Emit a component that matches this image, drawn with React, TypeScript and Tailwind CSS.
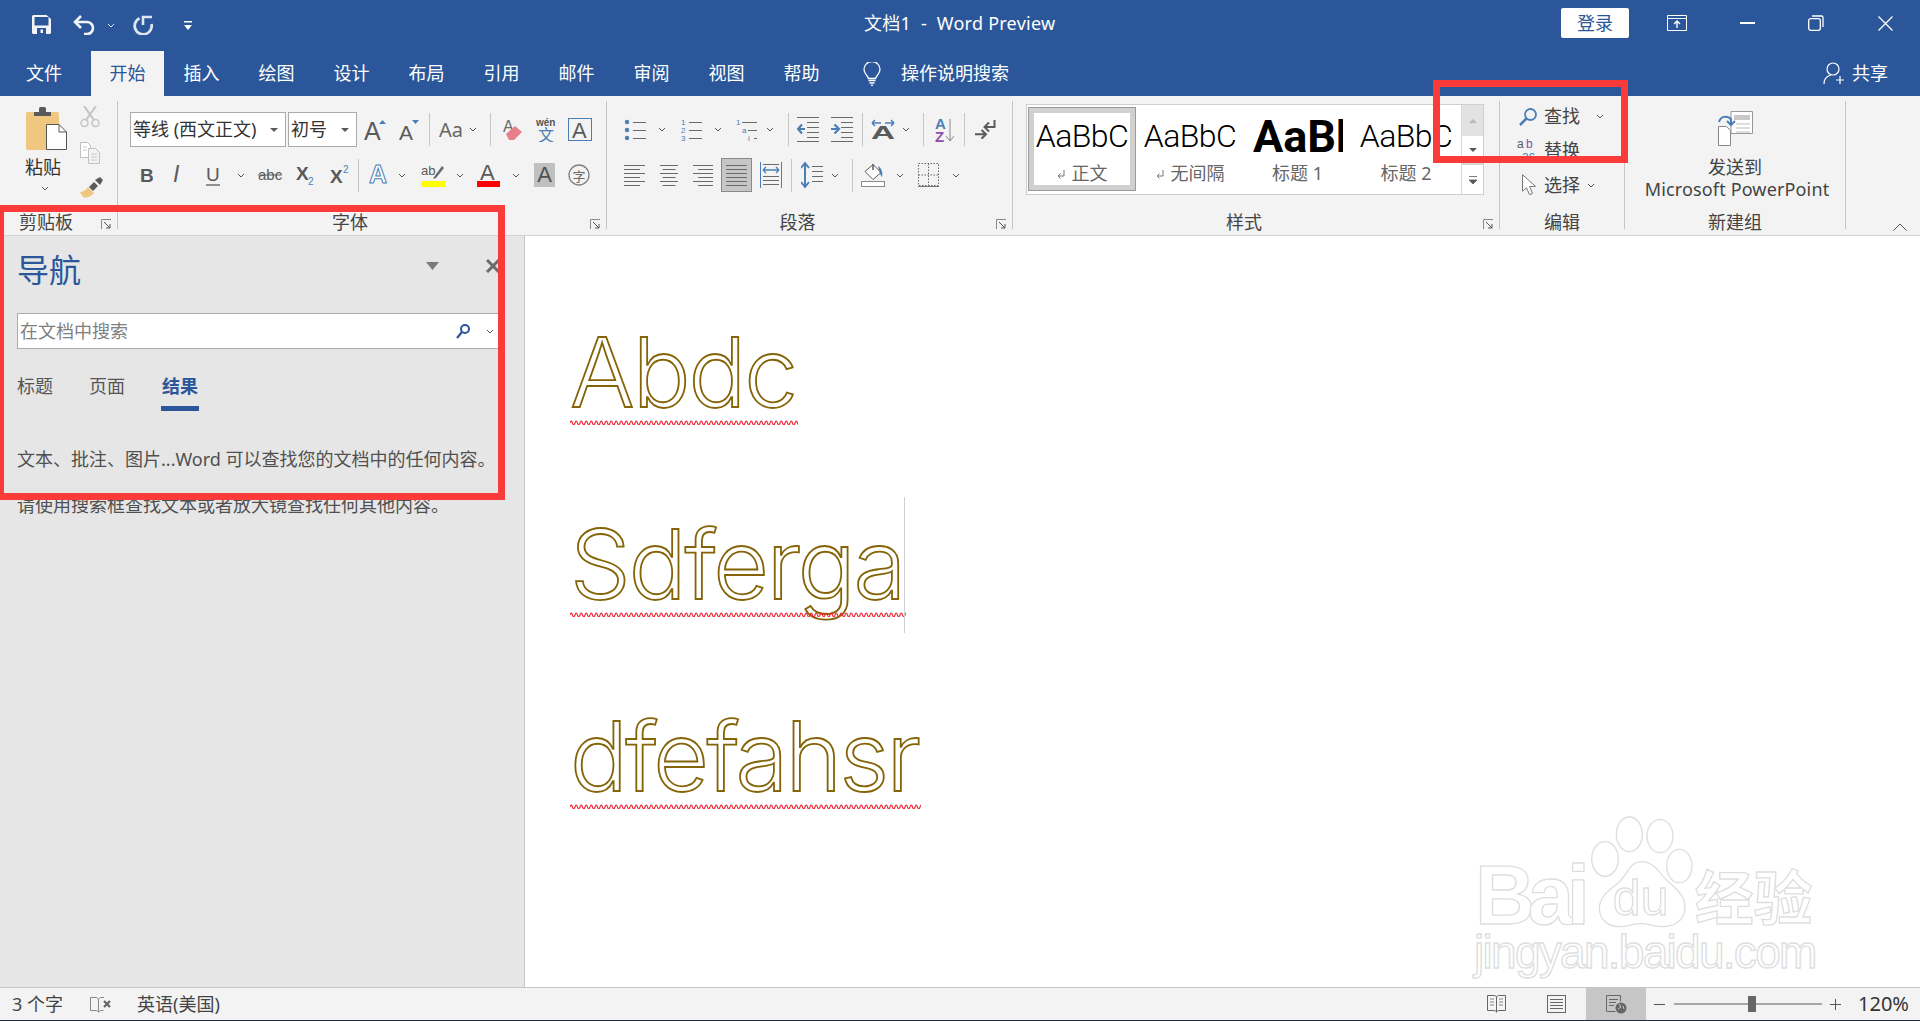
import type { ReactNode } from "react"

const GRAY = "#5a5a5a"
const LINE = "#6a6a6a"
const BLUE = "#4a7fb5"

function Svg({ w, h, className, children }: { w: number; h: number; className?: string; children: ReactNode }) {
  return (
    <svg width={w} height={h} viewBox={`0 0 ${w} ${h}`} className={`shrink-0 ${className ?? ""}`} fill="none">
      {children}
    </svg>
  )
}

function Chev({ className, color = "#555" }: { className?: string; color?: string }) {
  return (
    <Svg w={8} h={5} className={className}>
      <path d="M1 1l3 3 3-3" stroke={color} />
    </Svg>
  )
}

function Sep({ className }: { className?: string }) {
  return <div className={`w-px h-[33px] bg-[#c6c6c6] shrink-0 ${className ?? ""}`} />
}

function GroupSep() {
  return <div className="w-px h-[128px] mt-[5px] bg-[#c6c6c6] shrink-0" />
}

function Launcher({ className }: { className?: string }) {
  return (
    <Svg w={11} h={11} className={`absolute bottom-[5px] ${className ?? ""}`}>
      <path d="M.5 10V.5H10" stroke="#8a8a8a" />
      <path d="M3 3l6 6M9 5v4H5" stroke="#555" />
    </Svg>
  )
}

function Label({ children, className }: { children: ReactNode; className?: string }) {
  return (
    <div className={`relative h-[25px] flex items-center justify-center text-[18px] text-[#444] ${className ?? ""}`}>
      {children}
    </div>
  )
}

function Lines({ w, rows, x = 0 }: { w: number; rows: [number, number, number][]; x?: number }) {
  return (
    <>
      {rows.map(([y, a, b], i) => (
        <path key={i} d={`M${a + x} ${y + 0.5}H${Math.min(b, w)}`} stroke={LINE} />
      ))}
    </>
  )
}

const alignRows = (kind: "l" | "c" | "r" | "j", w: number): [number, number, number][] =>
  [3, 7, 11, 15, 19, 23].map((y, i) => {
    const short = i % 2 === 1 ? 5 : 0
    if (kind === "l") return [y, 0, w - short]
    if (kind === "c") return [y, short / 2 + 1, w - short / 2 - 1]
    if (kind === "r") return [y, short, w]
    return [y, 0, w]
  })

function AlignIcon({ kind, w, className }: { kind: "l" | "c" | "r" | "j"; w: number; className?: string }) {
  return (
    <Svg w={w} h={26} className={className}>
      <Lines w={w} rows={alignRows(kind, w)} />
    </Svg>
  )
}

function SvgText({ x, y, size, fill = GRAY, weight = 400, children, italic }: { x: number; y: number; size: number; fill?: string; weight?: number; children: ReactNode; italic?: boolean }) {
  return (
    <text x={x} y={y} fontSize={size} fill={fill} fontWeight={weight} fontStyle={italic ? "italic" : "normal"} fontFamily="'Liberation Sans','Noto Sans CJK SC',sans-serif">
      {children}
    </text>
  )
}

const tabs = ["插入", "绘图", "设计", "布局", "引用", "邮件", "审阅", "视图", "帮助"]

function TitleBar() {
  return (
    <div className="flex items-center h-[51px] text-white">
      <Svg w={19} h={19} className="ml-[32px] -mt-[3px]">
        <path d="M0 1.500A1.500 1.500 0 011.500 0h13L19 4v13.500a1.500 1.500 0 01-1.500 1.500h-16A1.500 1.500 0 010 17.500z" fill="#f2f4f8" />
        <rect x="2.500" y="2" width="14" height="8.500" fill="#2b579a" />
        <rect x="5" y="13" width="9" height="6" fill="#2b579a" />
        <rect x="8.500" y="14.500" width="2.500" height="3.500" fill="#f2f4f8" />
      </Svg>
      <Svg w={23} h={20} className="ml-[22px] -mt-[2px]">
        <path d="M2 7h12a6 6 0 016 6 6 6 0 01-6 6h-3" stroke="#f2f4f8" strokeWidth="2.600" />
        <path d="M8 1L2 7l6 6" stroke="#f2f4f8" strokeWidth="2.600" />
      </Svg>
      <Chev color="#dfe6f1" className="ml-[11px]" />
      <Svg w={21} h={20} className="ml-[18px] -mt-[2px]">
        <path d="M6.500 3.200A8.500 8.500 0 1018.500 9" stroke="#dfe5ef" strokeWidth="2.800" />
        <path d="M10 10V2h9" stroke="#dfe5ef" strokeWidth="2.600" />
      </Svg>
      <Svg w={8} h={9} className="ml-[30px]">
        <path d="M0 0h8v1.500H0z" fill="#fff" />
        <path d="M0 4h8L4 9z" fill="#fff" />
      </Svg>
      <div className="ml-[672px] w-[210px] text-[18px] whitespace-pre tracking-[0.25px] -mt-[5px]">文档1  -  Word Preview</div>
      <div className="ml-[487px] w-[68px] h-[30px] -mt-[5px] rounded-[2px] bg-white text-[#2b579a] text-[18px] flex items-center justify-center">登录</div>
      <Svg w={20} h={16} className="ml-[38px] -mt-[5px]">
        <path d="M.5.500h19v15H.5zM.5 3.500h19" stroke="#fff" />
        <path d="M10 13V6M7 9l3-3 3 3" stroke="#fff" strokeWidth="1.400" />
      </Svg>
      <div className="ml-[53px] w-[15px] h-[1.5px] bg-white -mt-[5px]" />
      <Svg w={16} h={16} className="ml-[53px] -mt-[5px]">
        <rect x=".7" y="3.700" width="11.600" height="11.600" rx="2" stroke="#fff" strokeWidth="1.300" />
        <path d="M4 1h9.500A1.500 1.500 0 0115 2.500V12" stroke="#fff" strokeWidth="1.300" />
      </Svg>
      <Svg w={15} h={15} className="ml-[54px] -mt-[5px]">
        <path d="M.5.500l14 14M14.500.500l-14 14" stroke="#fff" strokeWidth="1.300" />
      </Svg>
    </div>
  )
}

function TabBar() {
  return (
    <div className="flex h-[45px] text-[18px] text-white">
      <div className="w-[88px] flex items-center justify-center">文件</div>
      <div className="ml-[3px] w-[73px] flex items-center justify-center bg-[#f3f3f3] text-[#2b579a]">开始</div>
      {tabs.map((t) => (
        <div key={t} className="w-[75px] flex items-center justify-center">
          {t}
        </div>
      ))}
      <div className="ml-[24px] flex items-center">
        <Svg w={18} h={24}>
          <path d="M5.500 16.500C4.800 13.500 1 12 1 7.500a8 8 0 0116 0c0 4.500-3.800 6-4.500 9z" stroke="#fff" strokeWidth="1.300" />
          <path d="M5.500 18.500h7M6.500 21h5M8 23.500h2" stroke="#fff" strokeWidth="1.300" />
        </Svg>
      </div>
      <div className="ml-[20px] flex items-center">操作说明搜索</div>
      <div className="ml-auto mr-[32px] flex items-center">
        <Svg w={22} h={23}>
          <circle cx="10" cy="7" r="6" stroke="#fff" strokeWidth="1.200" />
          <path d="M1 22c0-5 3-8 7-9M13 18h8M17 14v8" stroke="#fff" strokeWidth="1.200" />
        </Svg>
        <span className="ml-[7px]">共享</span>
      </div>
    </div>
  )
}

function ClipboardGroup() {
  return (
    <div className="w-[117px] shrink-0 flex flex-col">
      <div className="flex-1 flex">
        <div className="ml-[25px] w-[42px] flex flex-col items-center pt-[11px]">
          <Svg w={41} h={43}>
            <rect x="0" y="5" width="33" height="38" rx="2" fill="#efc77f" />
            <path d="M8 5h17V9H8z" fill={GRAY} />
            <rect x="13" y="0" width="7" height="7" rx="1.500" fill={GRAY} />
            <path d="M20.500 17.500H33l7.500 7.500v17.500h-20z" fill="#fff" stroke="#555" />
            <path d="M33 17.500V25h7.500" stroke="#555" />
          </Svg>
          <div className="mt-[6px] -ml-[6px] text-[18px] leading-[22px] text-[#333]">粘贴</div>
          <Chev className="mt-[8px] -ml-[2px]" />
        </div>
        <div className="ml-[13px] flex flex-col pt-[10px]">
          <Svg w={20} h={22}>
            <circle cx="4.500" cy="17" r="3.500" stroke="#c4c4c4" strokeWidth="1.500" />
            <circle cx="15.500" cy="17" r="3.500" stroke="#c4c4c4" strokeWidth="1.500" />
            <path d="M6 14L16 0M14 14L4 0" stroke="#c4c4c4" strokeWidth="2" />
          </Svg>
          <Svg w={20} h={22} className="mt-[14px]">
            <path d="M.5.500h7l3 3v12H.5z" fill="#fff" stroke="#c0c0c0" />
            <path d="M8.500 6.500h7l4 4v11h-11z" fill="#f3f3f3" stroke="#c0c0c0" />
            <path d="M11 12h6M11 15h6M11 18h6M3 5h4M3 8h4" stroke="#c8c8c8" />
          </Svg>
          <Svg w={23} h={21} className="mt-[13px]">
            <path d="M15 3l5-3 3 3-3 5z" fill={GRAY} />
            <path d="M14 5l4 4-5 5-4-4z" fill={GRAY} />
            <path d="M8 10l6 6c-4 5-9 5-11 4l-3-5c3 0 6-2 8-5z" fill="#efc77f" />
          </Svg>
        </div>
      </div>
      <Label className="pr-[25px]">
        剪贴板
        <Launcher className="right-[5px]" />
      </Label>
    </div>
  )
}

function FontGroup() {
  return (
    <div className="w-[488px] shrink-0 flex flex-col">
      <div className="flex-1 pt-[16px]">
        <div className="flex items-center h-[35px]">
          <div className="ml-[12px] w-[156px] h-[35px] bg-white border border-[#ababab] flex items-center pl-[2px] pr-[7px] text-[18px] text-[#333] justify-between shrink-0">
            <span className="whitespace-nowrap">等线 (西文正文)</span>
            <Svg w={8} h={4}><path d="M0 0h8L4 4z" fill={GRAY} /></Svg>
          </div>
          <div className="ml-[2px] w-[69px] h-[35px] bg-white border border-[#ababab] flex items-center pl-[2px] pr-[7px] text-[18px] text-[#333] justify-between shrink-0">
            <span>初号</span>
            <Svg w={8} h={4}><path d="M0 0h8L4 4z" fill={GRAY} /></Svg>
          </div>
          <Svg w={22} h={22} className="ml-[7px]">
            <SvgText x={0} y={21} size={25}>A</SvgText>
            <path d="M15 5l3.500-4 3.500 4z" fill={BLUE} />
          </Svg>
          <Svg w={21} h={22} className="ml-[13px]">
            <SvgText x={0} y={21} size={21}>A</SvgText>
            <path d="M13 1h7l-3.500 4z" fill={BLUE} />
          </Svg>
          <Sep className="ml-[9px]" />
          <span className="ml-[9px] w-[23px] text-[20px] text-[#666] shrink-0">Aa</span>
          <Chev className="ml-[7px]" />
          <Sep className="ml-[13px]" />
          <Svg w={20} h={22} className="ml-[12px]">
            <SvgText x={0} y={13} size={16} fill={LINE}>A</SvgText>
            <path d="M3 15l9-8 7 6-8 8H6z" fill="#e97e8b" />
          </Svg>
          <Svg w={20} h={24} className="ml-[13px]">
            <text x="0" y="8" fontSize="10" fontWeight="700" fill="#555" fontFamily="'Liberation Sans',sans-serif">wén</text>
            <text x="2" y="23" fontSize="16" fill={BLUE} fontFamily="'Noto Sans CJK SC',sans-serif">文</text>
          </Svg>
          <Svg w={24} h={23} className="ml-[12px]">
            <rect x=".5" y=".5" width="23" height="22" stroke={BLUE} />
            <SvgText x={4} y={20} size={22}>A</SvgText>
          </Svg>
        </div>
        <div className="flex items-center h-[36px] mt-[10px]">
          <Svg w={13} h={20} className="ml-[22px]"><SvgText x={0} y={17} size={19} weight={700}>B</SvgText></Svg>
          <Svg w={13} h={20} className="ml-[20px]"><SvgText x={0} y={17} size={23} italic>I</SvgText></Svg>
          <Svg w={14} h={21} className="ml-[20px]">
            <SvgText x={0} y={16} size={19}>U</SvgText>
            <path d="M0 20h14" stroke={GRAY} strokeWidth="1.300" />
          </Svg>
          <Chev className="ml-[17px]" />
          <Svg w={24} h={18} className="ml-[13px]">
            <SvgText x={0} y={14} size={15}>abc</SvgText>
            <path d="M0 9h24" stroke={GRAY} />
          </Svg>
          <Svg w={18} h={20} className="ml-[14px]">
            <SvgText x={0} y={15} size={19} weight={700}>X</SvgText>
            <SvgText x={12} y={20} size={10} fill={BLUE}>2</SvgText>
          </Svg>
          <Svg w={19} h={20} className="ml-[16px]">
            <SvgText x={0} y={18} size={19} weight={700}>X</SvgText>
            <SvgText x={13} y={8} size={10} fill={BLUE}>2</SvgText>
          </Svg>
          <Sep className="ml-[9px]" />
          <Svg w={19} h={22} className="ml-[10px]">
            <text x="0" y="19" fontSize="25" fontWeight="700" fill="#fff" stroke={BLUE} strokeWidth="1" fontFamily="'Liberation Sans',sans-serif">A</text>
          </Svg>
          <Chev className="ml-[10px]" />
          <Svg w={24} h={24} className="ml-[15px]">
            <SvgText x={0} y={12} size={13}>ab</SvgText>
            <path d="M13 14L21 3l2 2-8 10-3 1z" fill={LINE} />
            <rect x="0" y="18" width="24" height="6" fill="#ffff00" />
          </Svg>
          <Chev className="ml-[11px]" />
          <Svg w={23} h={24} className="ml-[13px]">
            <SvgText x={3} y={17} size={22}>A</SvgText>
            <rect x="0" y="18" width="23" height="6" fill="#ff0000" />
          </Svg>
          <Chev className="ml-[12px]" />
          <div className="ml-[14px] w-[21px] h-[24px] bg-[#c0c0c0] flex items-center justify-center text-[22px] leading-none text-[#505050] font-['Liberation_Sans']">A</div>
          <Svg w={22} h={22} className="ml-[13px]">
            <circle cx="11" cy="11" r="10" stroke="#808080" strokeWidth="1.300" />
            <text x="4.500" y="16.500" fontSize="13" fill="#6a6a6a" fontFamily="'Noto Sans CJK SC',sans-serif">字</text>
          </Svg>
        </div>
      </div>
      <Label className="pr-[24px]">
        字体
        <Launcher className="right-[5px]" />
      </Label>
    </div>
  )
}

function ListIcon({ kind, className }: { kind: "b" | "n" | "m"; className?: string }) {
  const rows = [4, 12, 20]
  return (
    <Svg w={22} h={24} className={className}>
      {rows.map((y, i) => (
        <g key={y}>
          {kind === "b" && <circle cx="3" cy={y} r="2.200" fill={BLUE} />}
          {kind === "n" && (
            <text x="1" y={y + 3} fontSize="8" fill={BLUE} fontFamily="'Liberation Sans',sans-serif">{i + 1}</text>
          )}
          {kind === "m" && (
            <text x={1 + i * 6} y={y + 3} fontSize="8" fill={BLUE} fontFamily="'Liberation Sans',sans-serif">{["1", "a", "i"][i]}</text>
          )}
          <path d={`M${kind === "m" ? 7 + i * 6 : 9} ${y + 0.5}H22`} stroke={LINE} />
        </g>
      ))}
    </Svg>
  )
}

function IndentIcon({ dir, className }: { dir: "l" | "r"; className?: string }) {
  return (
    <Svg w={22} h={25} className={className}>
      <path d="M0 .5h22M10 5.500h12M10 10.500h12M10 15.500h12M10 20.500h12M0 24.500h22" stroke={LINE} />
      {dir === "l" ? (
        <path d="M8 12H1M5 7.500L1 12l4 4.500" stroke={BLUE} strokeWidth="2.200" />
      ) : (
        <path d="M0 12h7M3.500 7.500L8 12l-4.500 4.500" stroke={BLUE} strokeWidth="2.200" />
      )}
    </Svg>
  )
}

function ParagraphGroup() {
  return (
    <div className="w-[405px] shrink-0 flex flex-col">
      <div className="flex-1 pt-[16px]">
        <div className="flex items-center h-[35px]">
          <ListIcon kind="b" className="ml-[17px]" />
          <Chev className="ml-[12px]" />
          <ListIcon kind="n" className="ml-[14px]" />
          <Chev className="ml-[12px]" />
          <ListIcon kind="m" className="ml-[13px]" />
          <Chev className="ml-[9px]" />
          <Sep className="ml-[14px]" />
          <IndentIcon dir="l" className="ml-[8px]" />
          <IndentIcon dir="r" className="ml-[12px]" />
          <Sep className="ml-[9px]" />
          <Svg w={24} h={22} className="ml-[8px]">
            <path d="M1 4h9M1 4l3-3M1 4l3 3M14 4h9M23 4l-3-3M23 4l-3 3" stroke={BLUE} strokeWidth="1.500" />
            <text x="0" y="20" fontSize="19" fontWeight="700" fill={GRAY} textLength="24" lengthAdjust="spacingAndGlyphs" fontFamily="'Liberation Sans',sans-serif">A</text>
          </Svg>
          <Chev className="ml-[7px]" />
          <Sep className="ml-[13px]" />
          <Svg w={19} h={26} className="ml-[11px]">
            <text x="0" y="12" fontSize="15" fontWeight="700" fill={BLUE} fontFamily="'Liberation Sans',sans-serif">A</text>
            <text x="0" y="25" fontSize="15" fontWeight="700" fill="#8a4fa8" fontFamily="'Liberation Sans',sans-serif">Z</text>
            <path d="M15 2v22M11 19l4 5 4-5" stroke="#888" />
          </Svg>
          <Sep className="ml-[10px]" />
          <Svg w={21} h={19} className="ml-[10px]">
            <path d="M19.500 0v7h-10M14 2.500L9.500 7l4.500 4.500" stroke={GRAY} strokeWidth="2" />
            <path d="M0 14.300h11M6.500 10l4.500 4.300-4.500 4.500" stroke={GRAY} strokeWidth="2" />
          </Svg>
        </div>
        <div className="flex items-center h-[36px] mt-[10px]">
          <AlignIcon kind="l" w={21} className="ml-[17px]" />
          <AlignIcon kind="c" w={20} className="ml-[14px]" />
          <AlignIcon kind="r" w={20} className="ml-[14px]" />
          <div className="ml-[8px] w-[31px] h-[34px] bg-[#c6c6c6] border border-[#8a8a8a] flex items-center justify-center shrink-0">
            <AlignIcon kind="j" w={21} />
          </div>
          <Svg w={22} h={26} className="ml-[8px]">
            <path d="M.5 0v26M21.500 0v26" stroke={BLUE} />
            <path d="M3 2.500h16M3 18.500h16M3 14.500h16M3 22.500h16" stroke={LINE} />
            <path d="M3 8h16M3 8l3-3M3 8l3 3M19 8l-3-3M19 8l-3 3" stroke={BLUE} strokeWidth="1.300" />
          </Svg>
          <Sep className="ml-[9px]" />
          <Svg w={22} h={28} className="ml-[9px]">
            <path d="M4 2v24M0 7l4-5 4 5M0 21l4 5 4-5" stroke={BLUE} strokeWidth="2" />
            <path d="M11 5.500h11M11 10.500h11M11 15.500h11M11 20.500h11" stroke={LINE} />
          </Svg>
          <Chev className="ml-[8px]" />
          <Sep className="ml-[13px]" />
          <Svg w={24} h={24} className="ml-[8px]">
            <path d="M12 1.500l8 8-8 7-8-8z" fill="#fff" stroke={GRAY} />
            <path d="M12 1v6" stroke={GRAY} strokeWidth="1.500" />
            <path d="M17 3c3 2 5 5 4 11l-2-3z" fill={BLUE} />
            <rect x=".5" y="18.500" width="23" height="5" fill="#fff" stroke="#888" />
          </Svg>
          <Chev className="ml-[11px]" />
          <Svg w={21} h={24} className="ml-[14px]">
            <path d="M.5.500h20v22H.5zM.5 12h20M10.500.500v22" stroke="#666" strokeDasharray="1.500 1.500" />
            <path d="M0 23.500h21" stroke="#777" />
          </Svg>
          <Chev className="ml-[13px]" />
        </div>
      </div>
      <Label className="pr-[24px]">
        段落
        <Launcher className="right-[5px]" />
      </Label>
    </div>
  )
}

const sampleClass = "text-black font-['Roboto'] font-light text-[32px] leading-[30px] tracking-[-0.6px] whitespace-nowrap"

function ReturnMark() {
  return (
    <Svg w={8} h={9} className="mr-[7px] mt-[3px]">
      <path d="M7 0v6H1M3.500 3.500L1 6l2.500 2.500" stroke="#777" />
    </Svg>
  )
}

function StylesGroup() {
  return (
    <div className="w-[486px] shrink-0 flex flex-col">
      <div className="flex-1 pt-[8px]">
        <div className="ml-[13px] w-[458px] h-[91px] bg-white border border-[#cfcfcf] flex">
          <div className="ml-px mt-[2px] w-[108px] h-[84px] border border-[#9a9a9a] shrink-0">
            <div className="h-full border-[5px] border-[#d0d0ce] flex flex-col items-center pt-[8px]">
              <div className={sampleClass}>AaBbC</div>
              <div className="mt-[10px] flex items-center text-[18px] leading-[24px] text-[#666]">
                <ReturnMark />
                正文
              </div>
            </div>
          </div>
          <div className="w-[108px] flex flex-col items-center pt-[16px] shrink-0">
            <div className={sampleClass}>AaBbC</div>
            <div className="mt-[10px] flex items-center text-[18px] leading-[24px] text-[#666]">
              <ReturnMark />
              无间隔
            </div>
          </div>
          <div className="w-[90px] ml-[9px] flex flex-col pt-[9px] overflow-hidden shrink-0">
            <div className="text-black font-['Roboto'] font-bold text-[45px] leading-[45px] whitespace-nowrap h-[45px]">AaBbC</div>
            <div className="mt-[2px] ml-[19px] whitespace-nowrap text-[18px] leading-[24px] text-[#666]">标题 1</div>
          </div>
          <div className="w-[108px] ml-[9px] flex flex-col items-center pt-[16px] shrink-0">
            <div className={sampleClass}>AaBbC</div>
            <div className="mt-[10px] text-[18px] leading-[24px] text-[#666]">标题 2</div>
          </div>
          <div className="ml-auto w-[22px] flex flex-col border-l border-[#d8d8d8]">
            <div className="h-[31px] bg-[#e2e2e2] flex items-center justify-center">
              <Svg w={8} h={4}><path d="M0 4h8L4 0z" fill="#b8b8b8" /></Svg>
            </div>
            <div className="h-[29px] border-b-2 border-[#d8d8d8] flex items-center justify-center">
              <Svg w={8} h={4}><path d="M0 0h8L4 4z" fill={GRAY} /></Svg>
            </div>
            <div className="flex-1 flex items-center justify-center">
              <Svg w={8} h={8}><path d="M0 .5h8M0 4h8L4 8z" stroke={GRAY} strokeWidth=".8" fill={GRAY} /></Svg>
            </div>
          </div>
        </div>
      </div>
      <Label className="pr-[24px]">
        样式
        <Launcher className="right-[5px]" />
      </Label>
    </div>
  )
}

function EditGroup() {
  return (
    <div className="w-[124px] shrink-0 flex flex-col">
      <div className="flex-1 pt-[4px] pl-[19px] text-[18px] text-[#444]">
        <div className="flex items-center h-[33px]">
          <Svg w={18} h={18}>
            <circle cx="11.500" cy="6.500" r="5.500" stroke={BLUE} strokeWidth="1.800" />
            <path d="M7.500 10.500L1 17" stroke={BLUE} strokeWidth="2.500" />
          </Svg>
          <span className="ml-[7px]">查找</span>
          <Chev className="ml-[16px]" />
        </div>
        <div className="flex items-center h-[34px]">
          <Svg w={23} h={24} className="-ml-[2px]">
            <text x="0" y="10" fontSize="12" fill={GRAY} fontFamily="'Liberation Sans',sans-serif">a</text>
            <text x="9" y="10" fontSize="12" fill="#8a4fa8" fontFamily="'Liberation Sans',sans-serif">b</text>
            <text x="5" y="22" fontSize="12" fill={BLUE} fontFamily="'Liberation Sans',sans-serif">ac</text>
          </Svg>
          <span className="ml-[4px]">替换</span>
        </div>
        <div className="flex items-center h-[36px]">
          <Svg w={15} h={22} className="ml-[3px]">
            <path d="M.5.700v16.500l4-3.500 3 7 3-1.300-3-7h6z" fill="#fff" stroke="#777" />
          </Svg>
          <span className="ml-[7px]">选择</span>
          <Chev className="ml-[7px]" />
        </div>
      </div>
      <Label>编辑</Label>
    </div>
  )
}

function NewGroup() {
  return (
    <div className="w-[220px] shrink-0 flex flex-col">
      <div className="flex-1 pt-[14px] flex flex-col items-center text-[18px] leading-[22px] text-[#444]">
        <Svg w={36} h={36}>
          <path d="M14 1.500h21.500v22H14z" fill="#fff" stroke="#999" />
          <path d="M17 5h16v5H17z" fill="#c8c8c8" />
          <path d="M19 14h14M19 18h14M19 22h14" stroke="#bbb" />
          <path d="M1.500 16.500h8l4 4v15h-12z" fill="#fff" stroke="#888" />
          <path d="M2 12a7 7 0 0112-3v5M10 11l4 4 4-4" stroke={BLUE} strokeWidth="2" />
        </Svg>
        <div className="mt-[10px]">发送到</div>
        <div className="ml-[4px] whitespace-nowrap tracking-[0.15px]">Microsoft PowerPoint</div>
      </div>
      <Label>新建组</Label>
    </div>
  )
}

function Ribbon() {
  return (
    <div className="flex h-[140px] bg-[#f3f3f3] border-b border-[#d2d2d2]">
      <ClipboardGroup />
      <GroupSep />
      <FontGroup />
      <GroupSep />
      <ParagraphGroup />
      <GroupSep />
      <StylesGroup />
      <GroupSep />
      <EditGroup />
      <GroupSep />
      <NewGroup />
      <GroupSep />
      <div className="flex-1 flex items-end justify-end pr-[13px] pb-[4px]">
        <Svg w={14} h={8}><path d="M.5 7.500L7 1l6.500 6.500" stroke="#555" /></Svg>
      </div>
    </div>
  )
}

function NavPane() {
  return (
    <div className="w-[525px] shrink-0 bg-[#e6e6e6] border-r border-[#c6c6c6] pl-[17px] pr-[24px]">
      <div className="flex items-center h-[77px] pb-[10px]">
        <span className="text-[32px] text-[#2b579a] leading-none">导航</span>
        <Svg w={13} h={8} className="ml-[345px] -mt-[7px]"><path d="M0 0h13L6.500 8z" fill="#7a7a7a" /></Svg>
        <Svg w={14} h={14} className="ml-[47px] -mt-[7px]"><path d="M1 1l12 12M13 1L1 13" stroke="#6a6a6a" strokeWidth="3" /></Svg>
      </div>
      <div className="h-[36px] bg-white border border-[#ababab] flex items-center pl-[2px] text-[18px] text-[#808080]">
        在文档中搜索
        <Svg w={14} h={15} className="ml-auto mr-[16px]">
          <circle cx="9" cy="5" r="4" stroke="#2b579a" strokeWidth="2" />
          <path d="M6 8l-5 6" stroke="#2b579a" strokeWidth="2.200" />
        </Svg>
        <Chev className="mr-[5px]" />
      </div>
      <div className="flex mt-[22px] text-[18px] text-[#555]">
        <span className="w-[36px] leading-[30px]">标题</span>
        <span className="ml-[36px] w-[36px] leading-[30px]">页面</span>
        <div className="ml-[36px] flex flex-col">
          <span className="px-px font-bold text-[#2b579a] leading-[30px]">结果</span>
          <div className="mt-[5px] h-[5px] bg-[#2b579a]" />
        </div>
      </div>
      <div className="mt-[25px] text-[18px] leading-[46px] text-[#505050] whitespace-nowrap">
        <div>文本、批注、图片...Word 可以查找您的文档中的任何内容。</div>
        <div>请使用搜索框查找文本或者放大镜查找任何其他内容。</div>
      </div>
    </div>
  )
}

const wavePath = (w: number) => {
  let d = "M0 3"
  for (let x = 0; x < w; x += 5) d += "q1.250 -4 2.500 0t2.500 0"
  return d
}

function DocLine({ text, wave, className }: { text: string; wave: number; className?: string }) {
  return (
    <div className="relative h-[192px] leading-[192px]">
      <span className={`font-['Inter'] font-light text-[96px] text-white [-webkit-text-stroke:1.8px_#856408] ${className ?? ""}`}>{text}</span>
      <svg width={wave} height={5} viewBox={`0 0 ${wave} 5`} fill="none" className="absolute left-0 top-[144px]">
        <path d={wavePath(wave)} stroke="#f0202c" strokeWidth="1.100" />
      </svg>
    </div>
  )
}

function Watermark() {
  const stroke = { fill: "#fff", stroke: "#dedede", strokeWidth: 4 }
  return (
    <svg width={520} height={241} viewBox="0 0 1560 723" className="absolute left-[875px] top-[544px]">
      <ellipse cx="615" cy="237" rx="40" ry="52" {...stroke} />
      <ellipse cx="688" cy="163" rx="39" ry="52" {...stroke} />
      <ellipse cx="780" cy="168" rx="39" ry="50" {...stroke} />
      <ellipse cx="838" cy="258" rx="38" ry="50" {...stroke} />
      <path d="M725 245c40 0 55 40 85 65 25 22 45 40 45 72 0 42-35 58-70 58-25 0-40-10-60-10s-40 10-65 10c-35 0-62-20-62-55 0-35 30-55 55-75 30-25 35-65 72-65z" {...stroke} />
      <text x="225" y="433" fontSize="250" fontWeight="700" textLength="345" fontFamily="'Liberation Sans',sans-serif" {...stroke}>Bai</text>
      <text x="638" y="405" fontSize="150" textLength="168" fontFamily="'Liberation Sans',sans-serif" {...stroke}>du</text>
      <text x="885" y="420" fontSize="176" textLength="352" fontWeight="700" fontFamily="'Noto Sans CJK SC',sans-serif" {...stroke}>经验</text>
      <text x="222" y="565" fontSize="138" textLength="1030" fontFamily="'Liberation Sans',sans-serif" {...stroke}>jingyan.baidu.com</text>
    </svg>
  )
}

function Doc() {
  return (
    <div className="relative flex-1 bg-white pl-[45px] pt-[40px] overflow-hidden">
      <DocLine text="Abdc" wave={228} className="tracking-[-2px]" />
      <DocLine text="Sdferga" wave={336} className="tracking-[-2px]" />
      <DocLine text="dfefahsr" wave={351} className="tracking-[-2.600px]" />
      <div className="absolute left-[379px] top-[261px] w-px h-[136px] bg-[#d0d0d0]" />
      <Watermark />
    </div>
  )
}

function StatusBar() {
  return (
    <div className="flex items-center h-[34px] bg-[#f3f3f3] border-t border-[#c6c6c6] border-b border-b-[#1f2d3a] text-[18px] text-[#444]">
      <span className="ml-[12px] whitespace-pre">3 个字</span>
      <Svg w={22} h={17} className="ml-[27px]">
        <path d="M.5 1.500h6l2 1.500 2-1.500H14M.5 1.500v13h6l2 1.500 2-1.500h3M8.500 3v13" stroke="#888" />
        <path d="M14 5l6 6M20 5l-6 6" stroke="#666" strokeWidth="2.200" />
      </Svg>
      <span className="ml-[25px]">英语(美国)</span>
      <Svg w={19} h={18} className="ml-auto">
        <path d="M.5.500h7l2 1 2-1h7v15h-7l-2 1-2-1h-7zM9.500 1.500v16" stroke="#666" />
        <path d="M3 4h4M3 7h4M3 10h4M12 4h4M12 7h4M12 10h4" stroke="#888" />
      </Svg>
      <Svg w={19} h={18} className="ml-[41px]">
        <rect x=".5" y=".5" width="18" height="17" stroke="#666" />
        <path d="M3 4.500h13M3 7.500h13M3 10.500h13M3 13.500h13" stroke="#666" />
      </Svg>
      <div className="ml-[20px] w-[60px] h-full bg-[#c6c6c6] flex items-center justify-center shrink-0">
        <Svg w={21} h={19}>
          <path d="M.5 16V.5h14v6" stroke="#666" />
          <path d="M.5 16.500h9M3 4.500h9M3 7.500h7M3 10.500h5" stroke="#666" />
          <circle cx="15" cy="13" r="5.500" fill="#666" />
          <path d="M13 9l2 3-3 2M17 11l1 3" stroke="#c6c6c6" />
        </Svg>
      </div>
      <div className="ml-[8px] w-[11px] h-px bg-[#555]" />
      <div className="ml-[9px] w-[148px] h-[2px] bg-[#a6a6a6] relative">
        <div className="absolute left-[74px] -top-[7px] w-[8px] h-[16px] bg-[#666]" />
      </div>
      <Svg w={11} h={11} className="ml-[8px]"><path d="M0 5.500h11M5.500 0v11" stroke="#555" /></Svg>
      <span className="ml-[17px] mr-[11px] text-[20px] text-[#333]">120%</span>
    </div>
  )
}

export default function App() {
  return (
    <div className="relative h-[1021px] w-[1920px] overflow-hidden flex flex-col bg-white font-['Noto_Sans','Noto_Sans_CJK_SC',sans-serif]">
      <div className="bg-[#2b579a]">
        <TitleBar />
        <TabBar />
      </div>
      <Ribbon />
      <div className="flex flex-1 min-h-0">
        <NavPane />
        <Doc />
      </div>
      <StatusBar />
      {/* red annotation boxes drawn over the screenshot */}
      <div className="absolute left-[-3px] top-[205px] w-[508px] h-[295px] border-[7px] border-[#fb3a3a]" />
      <div className="absolute left-[1433px] top-[80px] w-[195px] h-[83px] border-[7px] border-[#fb3a3a]" />
    </div>
  )
}
